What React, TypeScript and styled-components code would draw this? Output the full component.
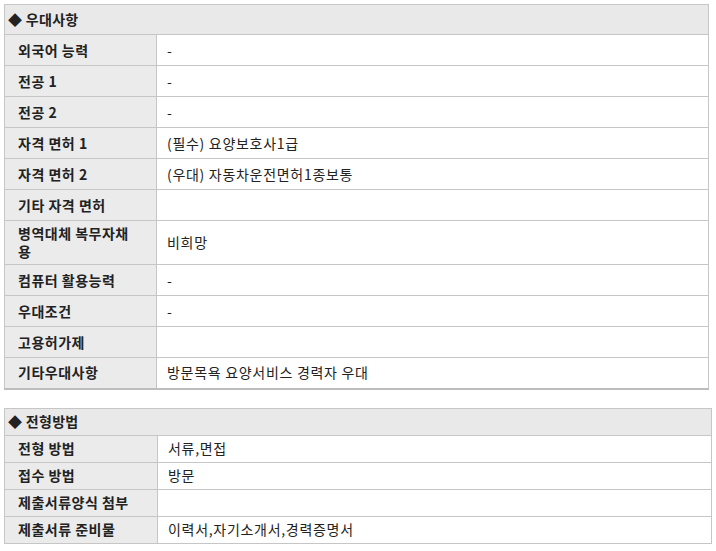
import React from "react";
import styled, { createGlobalStyle } from "styled-components";

type Row = { label: string; value: string };

const preferRows: Row[] = [
  { label: "외국어 능력", value: "-" },
  { label: "전공 1", value: "-" },
  { label: "전공 2", value: "-" },
  { label: "자격 면허 1", value: "(필수) 요양보호사1급" },
  { label: "자격 면허 2", value: "(우대) 자동차운전면허1종보통" },
  { label: "기타 자격 면허", value: "" },
  { label: "병역대체 복무자채용", value: "비희망" },
  { label: "컴퓨터 활용능력", value: "-" },
  { label: "우대조건", value: "-" },
  { label: "고용허가제", value: "" },
  { label: "기타우대사항", value: "방문목욕 요양서비스 경력자 우대" },
];

const screenRows: Row[] = [
  { label: "전형 방법", value: "서류,면접" },
  { label: "접수 방법", value: "방문" },
  { label: "제출서류양식 첨부", value: "" },
  { label: "제출서류 준비물", value: "이력서,자기소개서,경력증명서" },
];

const GlobalStyle = createGlobalStyle`
  body {
    margin: 0;
    padding: 4px;
    background: #fff;
    font-family: "Noto Sans CJK KR", "Noto Sans", sans-serif;
    font-size: 14px;
    color: #222;
  }
`;

const Page = styled.div`
  display: flex;
  flex-direction: column;
  gap: 18px;
`;

const Table = styled.table<{ $width: number; $thickBottom?: boolean }>`
  width: ${(p) => p.$width}px;
  border-collapse: collapse;
  table-layout: fixed;
  border: 1px solid #c6c6c6;
  border-bottom: ${(p) => (p.$thickBottom ? "2px solid #bdbdbd" : "1px solid #c6c6c6")};
`;

const HeadCell = styled.th<{ $h: number }>`
  height: ${(p) => p.$h}px;
  padding: 0 3px 1px;
  background: #e9e9e9;
  border-bottom: 1px solid #c6c6c6;
  text-align: left;
  font-weight: 700;
  font-size: 14px;
  letter-spacing: 0.3px;
  line-height: 18px;
  box-sizing: border-box;
`;

const Label = styled.th<{ $h: number }>`
  height: ${(p) => p.$h}px;
  padding: 3px 20px 4px 13px;
  background: #ebebeb;
  border: 1px solid #c6c6c6;
  border-left: none;
  text-align: left;
  font-weight: 700;
  font-size: 14px;
  letter-spacing: 0.5px;
  line-height: 18px;
  box-sizing: border-box;
`;

const Value = styled.td<{ $h: number }>`
  height: ${(p) => p.$h}px;
  padding: 3px 10px 4px;
  background: #fff;
  border-bottom: 1px solid #c6c6c6;
  font-size: 14px;
  letter-spacing: 0.7px;
  line-height: 18px;
  box-sizing: border-box;
`;

type SectionProps = {
  title: string;
  rows: Row[];
  width: number;
  labelWidth: number;
  headH: number;
  rowH: number;
  thickBottom?: boolean;
};

const Section = ({ title, rows, width, labelWidth, headH, rowH, thickBottom }: SectionProps) => (
  <Table $width={width} $thickBottom={thickBottom}>
    <colgroup>
      <col style={{ width: labelWidth }} />
      <col />
    </colgroup>
    <thead>
      <tr>
        <HeadCell colSpan={2} $h={headH}>
          ◆ {title}
        </HeadCell>
      </tr>
    </thead>
    <tbody>
      {rows.map((r, i) => (
        <tr key={i}>
          <Label $h={rowH}>{r.label}</Label>
          <Value $h={rowH}>{r.value}</Value>
        </tr>
      ))}
    </tbody>
  </Table>
);

const App = () => (
  <>
    <GlobalStyle />
    <Page>
      <Section
        title="우대사항"
        rows={preferRows}
        width={705}
        labelWidth={152}
        headH={30}
        rowH={31}
        thickBottom
      />
      <Section
        title="전형방법"
        rows={screenRows}
        width={708}
        labelWidth={153}
        headH={27}
        rowH={27}
      />
    </Page>
  </>
);

export default App;
